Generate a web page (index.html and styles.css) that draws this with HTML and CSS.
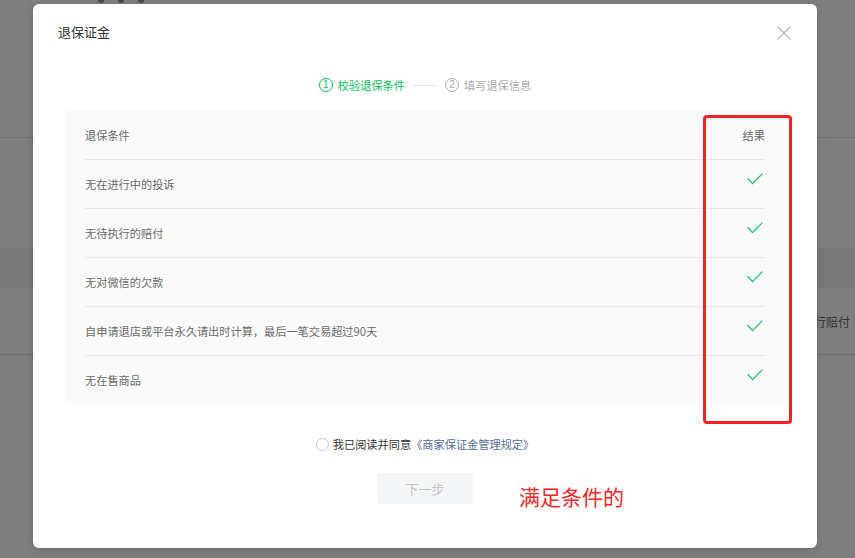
FILE: index.html
```html
<!DOCTYPE html>
<html lang="zh-CN">
<head>
<meta charset="utf-8">
<title>退保证金</title>
<link rel="stylesheet" href="styles.css">
</head>
<body>
<div class="page">
  <div class="page-top"><span class="dot"></span><span class="dot"></span><span class="dot"></span></div>
  <div class="page-rows">
    <div class="page-row page-row-a"></div>
    <div class="page-row page-row-band"></div>
    <div class="page-row page-row-text"><span>无待执行赔付</span></div>
    <div class="page-row page-row-end"></div>
  </div>
</div>

<div class="modal">
  <div class="modal-header">
    <span class="modal-title">退保证金</span>
    <button class="modal-close" aria-label="关闭">
      <svg width="14" height="14" viewBox="0 0 14 14"><path d="M0.5 0.5 L13.5 13.5 M13.5 0.5 L0.5 13.5" stroke="#b5b5b5" stroke-width="1.1" fill="none"/></svg>
    </button>
  </div>

  <div class="steps">
    <div class="step active"><span class="step-num">1</span><span>校验退保条件</span></div>
    <span class="step-line"></span>
    <div class="step"><span class="step-num">2</span><span>填写退保信息</span></div>
  </div>

  <div class="cond-table">
    <div class="cond-row cond-head"><span>退保条件</span><span>结果</span></div>
    <div class="cond-row"><span>无在进行中的投诉</span><svg class="check" width="16" height="12" viewBox="0 0 16 12"><path d="M0.6 5.2 L5.6 10.6 L15.4 0.6" stroke="#1fc06a" stroke-width="1.3" fill="none"/></svg></div>
    <div class="cond-row"><span>无待执行的赔付</span><svg class="check" width="16" height="12" viewBox="0 0 16 12"><path d="M0.6 5.2 L5.6 10.6 L15.4 0.6" stroke="#1fc06a" stroke-width="1.3" fill="none"/></svg></div>
    <div class="cond-row"><span>无对微信的欠款</span><svg class="check" width="16" height="12" viewBox="0 0 16 12"><path d="M0.6 5.2 L5.6 10.6 L15.4 0.6" stroke="#1fc06a" stroke-width="1.3" fill="none"/></svg></div>
    <div class="cond-row"><span>自申请退店或平台永久请出时计算，最后一笔交易超过90天</span><svg class="check" width="16" height="12" viewBox="0 0 16 12"><path d="M0.6 5.2 L5.6 10.6 L15.4 0.6" stroke="#1fc06a" stroke-width="1.3" fill="none"/></svg></div>
    <div class="cond-row"><span>无在售商品</span><svg class="check" width="16" height="12" viewBox="0 0 16 12"><path d="M0.6 5.2 L5.6 10.6 L15.4 0.6" stroke="#1fc06a" stroke-width="1.3" fill="none"/></svg></div>
  </div>

  <div class="agree">
    <span class="radio"></span><span>我已阅读并同意</span><a class="agree-link" href="#">《商家保证金管理规定》</a>
  </div>

  <div class="actions">
    <button class="btn-next" disabled>下一步</button>
  </div>

  <div class="mark-box"></div>
  <div class="mark-text">满足条件的</div>
</div>
</body>
</html>
```

FILE: styles.css
```css
html, body {
  margin: 0;
  padding: 0;
}

body {
  width: 855px;
  height: 558px;
  background: #7f7f7f;
  font-family: "Noto Sans CJK SC", "Noto Sans", "Liberation Sans", sans-serif;
  overflow: hidden;
  position: relative;
}

/* underlying page (dimmed by overlay) */
.page-top {
  height: 4px;
  display: flex;
  align-items: flex-start;
  gap: 14px;
  padding-left: 98px;
}

.dot {
  width: 6px;
  height: 3px;
  background: #4a4a4a;
  border-radius: 0 0 3px 3px;
}

.page-rows {
  margin-top: 133px;
}

.page-row-a {
  height: 110px;
  border-top: 1px solid #717171;
}

.page-row-band {
  height: 40px;
  background: #7a7a7a;
}

.page-row-text {
  height: 66px;
  display: flex;
  justify-content: flex-end;
  align-items: center;
  padding-right: 5px;
  font-size: 12px;
  color: #333;
}

.page-row-end {
  border-top: 1px solid #6e6e6e;
  height: 40px;
}

/* modal */
.modal {
  position: absolute;
  left: 33px;
  top: 4px;
  width: 784px;
  height: 544px;
  background: #fff;
  border-radius: 6px;
  box-shadow: 0 2px 10px rgba(0, 0, 0, 0.15);
  display: flex;
  flex-direction: column;
}

.modal-header {
  display: flex;
  justify-content: space-between;
  align-items: center;
  padding: 18px 26px 0 25px;
  height: 20px;
}

.modal-title {
  font-size: 13px;
  line-height: 20px;
  color: #333;
}

.modal-close {
  width: 14px;
  height: 14px;
  padding: 0;
  border: 0;
  background: none;
  display: block;
  margin-top: 2px;
}

.modal-close svg {
  display: block;
}

.steps {
  margin-top: 33px;
  height: 20px;
  display: flex;
  justify-content: center;
  align-items: center;
  font-size: 11.2px;
}

.step {
  display: flex;
  align-items: center;
  gap: 5px;
  color: #ababab;
}

.step.active {
  color: #07c160;
}

.step-num {
  width: 12px;
  height: 12px;
  border: 1px solid currentColor;
  border-radius: 50%;
  font-size: 10px;
  line-height: 12px;
  text-align: center;
  font-family: "Liberation Sans", sans-serif;
}

.step-line {
  width: 24px;
  height: 1px;
  background: #e2e2e2;
  margin: 0 8px;
}

.cond-table {
  margin: 16px 32px 0;
  background: #fafafa;
  padding: 0 20px;
}

.cond-row {
  height: 48px;
  display: flex;
  justify-content: space-between;
  align-items: center;
  font-size: 11.2px;
  color: #6b6b6b;
  border-top: 1px solid #e9e9e9;
}

.cond-head {
  border-top: 0;
}

.check {
  display: block;
  margin-right: 2px;
  margin-bottom: 11px;
}

.agree {
  margin-top: 30px;
  height: 20px;
  display: flex;
  justify-content: center;
  align-items: center;
  font-size: 11.2px;
  color: #333;
}

.radio {
  width: 11px;
  height: 11px;
  border: 1px solid #c8c8c8;
  border-radius: 50%;
  margin-right: 4px;
}

.agree-link {
  color: #576b95;
  text-decoration: none;
}

.actions {
  margin-top: 19px;
  display: flex;
  justify-content: center;
}

.btn-next {
  width: 96px;
  height: 31px;
  border: 0;
  border-radius: 4px;
  background: #f4f5f7;
  color: #c3c3c3;
  font-size: 13px;
  font-family: inherit;
  padding: 0;
}

/* red annotations */
.mark-box {
  position: absolute;
  left: 670px;
  top: 111px;
  width: 89px;
  height: 309px;
  box-sizing: border-box;
  border: 3px solid #ff1f1f;
  border-radius: 4px;
}

.mark-text {
  position: absolute;
  left: 486px;
  top: 478px;
  font-size: 21px;
  line-height: 28px;
  color: #ff2424;
}
```
